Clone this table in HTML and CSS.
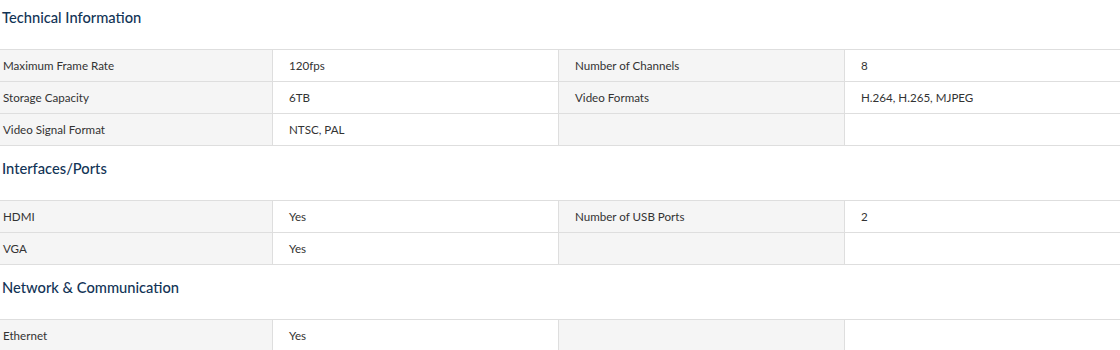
FILE: index.html
```html
<!DOCTYPE html>
<html>
<head>
<meta charset="utf-8">
<link rel="stylesheet" href="styles.css">
</head>
<body>
<div class="specs">
  <section class="group first">
    <h3 class="group-title">Technical Information</h3>
    <table class="spec-table">
      <tr><td class="label">Maximum Frame Rate</td><td class="value">120fps</td><td class="label">Number of Channels</td><td class="value">8</td></tr>
      <tr><td class="label">Storage Capacity</td><td class="value">6TB</td><td class="label">Video Formats</td><td class="value">H.264, H.265, MJPEG</td></tr>
      <tr><td class="label">Video Signal Format</td><td class="value">NTSC, PAL</td><td class="label"></td><td class="value"></td></tr>
    </table>
  </section>
  <section class="group">
    <h3 class="group-title">Interfaces/Ports</h3>
    <table class="spec-table">
      <tr><td class="label">HDMI</td><td class="value">Yes</td><td class="label">Number of USB Ports</td><td class="value">2</td></tr>
      <tr><td class="label">VGA</td><td class="value">Yes</td><td class="label"></td><td class="value"></td></tr>
    </table>
  </section>
  <section class="group">
    <h3 class="group-title">Network &amp; Communication</h3>
    <table class="spec-table">
      <tr><td class="label">Ethernet</td><td class="value">Yes</td><td class="label"></td><td class="value"></td></tr>
    </table>
  </section>
</div>
</body>
</html>
```
FILE: styles.css
```css
html, body {
  margin: 0;
  padding: 0;
  background: #fff;
  overflow: hidden;
}
body {
  font-family: "Lato", "Open Sans", sans-serif;
  color: #333;
}
.specs {
  width: 1144px;
  margin-left: -14px;
}
.group-title {
  margin: 12px 0 22px;
  padding: 0 16px;
  font-size: 14.7px;
  line-height: 20px;
  font-weight: 500;
  color: #123456;
}
.group.first .group-title {
  margin-top: 7px;
}
.spec-table {
  width: 1144px;
  border-collapse: collapse;
  table-layout: fixed;
}
.spec-table td {
  width: 286px;
  height: 31px;
  padding: 0 16px 1px;
  border: 1px solid #dedede;
  font-size: 11.6px;
  color: #333;
  vertical-align: middle;
  box-sizing: border-box;
}
.spec-table tr {
  height: 32px;
}
.spec-table td.label {
  background: #f5f5f5;
}
.spec-table td.value {
  background: #fff;
}
```
